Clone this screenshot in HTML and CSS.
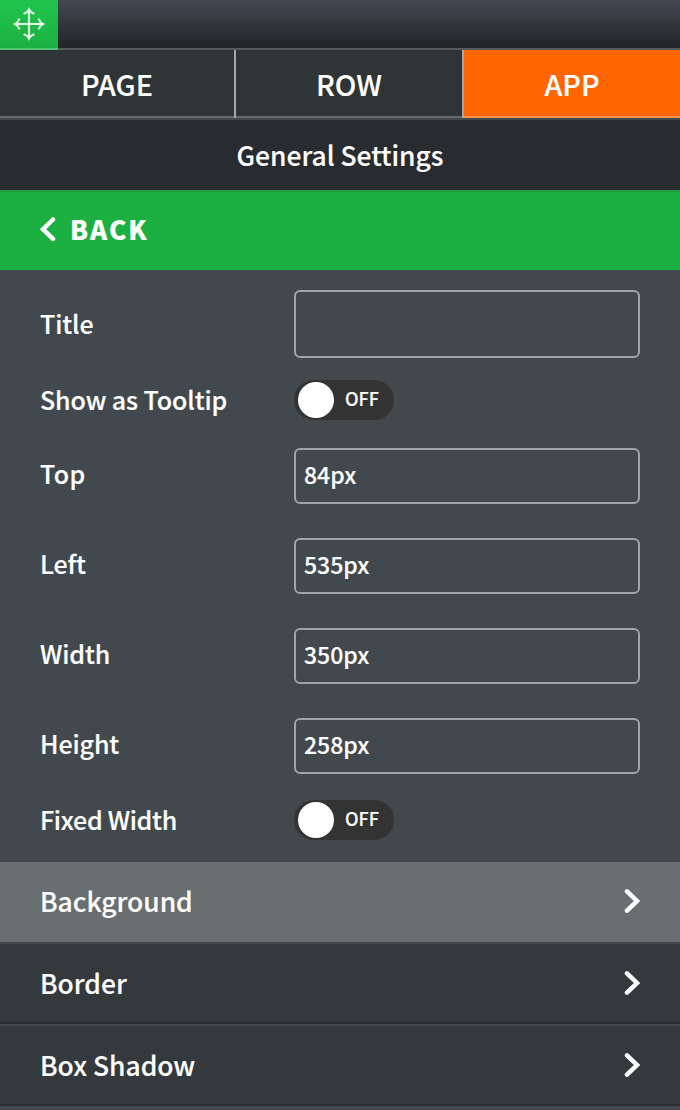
FILE: index.html
```html
<!DOCTYPE html>
<html lang="en">
<head>
<meta charset="utf-8">
<title>General Settings</title>
<link rel="stylesheet" href="styles.css">
</head>
<body>
<div class="panel">
  <header class="topbar">
    <div class="move">
      <svg class="move-icon" width="32" height="34" viewBox="0 0 32 34">
        <path d="M16 3V31M3 17H29"/>
        <path class="heads" d="M11.500 6.500Q14.500 5.500 16 2.500Q17.500 5.500 20.500 6.500M11.500 27.500Q14.500 28.500 16 31.500Q17.500 28.500 20.500 27.500M6 12.500Q5 15.500 2 17Q5 18.500 6 21.500M26 12.500Q27 15.500 30 17Q27 18.500 26 21.500"/>
      </svg>
    </div>
  </header>
  <nav class="tabs">
    <div class="tab tab-page"><span>PAGE</span></div>
    <div class="divider"></div>
    <div class="tab tab-row"><span>ROW</span></div>
    <div class="divider"></div>
    <div class="tab tab-app active"><span>APP</span></div>
  </nav>
  <div class="heading"><span>General Settings</span></div>
  <div class="back">
    <svg class="chevron" width="16" height="26" viewBox="0 0 16 26"><path d="M13 3.500L3 13.200L13 22.900"/></svg>
    <span>BACK</span>
  </div>
  <div class="form">
    <div class="field field-title"><label>Title</label><div class="input"></div></div>
    <div class="field field-toggle"><label>Show as Tooltip</label><div class="toggle"><i class="knob"></i><span>OFF</span></div></div>
    <div class="field"><label class="top">Top</label><div class="input"><span>84px</span></div></div>
    <div class="field"><label>Left</label><div class="input"><span>535px</span></div></div>
    <div class="field"><label>Width</label><div class="input"><span>350px</span></div></div>
    <div class="field"><label>Height</label><div class="input"><span>258px</span></div></div>
    <div class="field field-toggle"><label class="fixed">Fixed Width</label><div class="toggle"><i class="knob"></i><span>OFF</span></div></div>
  </div>
  <div class="sections">
    <div class="section current"><span>Background</span><svg class="chevron" width="16" height="26" viewBox="0 0 16 26"><path d="M3 3.300L13 13L3 22.700"/></svg></div>
    <div class="section"><span>Border</span><svg class="chevron" width="16" height="26" viewBox="0 0 16 26"><path d="M3 3.300L13 13L3 22.700"/></svg></div>
    <div class="section"><span>Box Shadow</span><svg class="chevron" width="16" height="26" viewBox="0 0 16 26"><path d="M3 3.300L13 13L3 22.700"/></svg></div>
  </div>
</div>
</body>
</html>
```
FILE: styles.css
```css
* { box-sizing: border-box; }
body {
  margin: 0;
  background: #42494e;
  color: #fff;
  font-family: "Noto Sans CJK SC", sans-serif;
  font-weight: 500;
  -webkit-text-stroke: 0.15px #fff;
}
.panel { width: 680px; height: 1110px; overflow: hidden; }
.topbar {
  height: 50px;
  border-bottom: 2px solid #56595b;
  background: linear-gradient(#434751, #212527) padding-box;
}
.move {
  width: 58px;
  height: 50px;
  display: flex;
  justify-content: center;
  padding-top: 7px;
  background: linear-gradient(#20c54c, #1cb042);
  border-bottom: 2px solid #55c270;
}
.move-icon { fill: none; stroke: #dcf8e3; stroke-width: 2.2; stroke-linecap: round; }
.tabs { display: flex; height: 70px; border-bottom: 2px solid #42494d; }
.tab {
  display: flex;
  align-items: center;
  justify-content: center;
  height: 68px;
  padding-top: 2px;
  background: #2f3437;
  border-bottom: 2px solid #626769;
  font-size: 28.7px;
  line-height: 40px;
}
.tab-page { width: 234px; }
.tab-row { width: 226px; }
.tab-app { width: 216px; }
.divider { width: 2px; height: 68px; background: #a5a7a8; }
.active { background: #ff6600; border-bottom-color: #ff914b; }
.heading {
  height: 70px;
  display: flex;
  align-items: center;
  justify-content: center;
  background: #282b2f;
  font-size: 26.4px;
  line-height: 40px;
}
.back {
  height: 80px;
  display: flex;
  align-items: center;
  gap: 14px;
  padding: 0 40px 4px;
  border-top: 2px solid #1d9f3e;
  background: #1cb042;
  font-size: 26px;
  font-weight: 900;
  letter-spacing: 2px;
  line-height: 40px;
}
.chevron { fill: none; stroke: #fff; stroke-width: 4.500; stroke-linecap: round; }
.form {
  height: 592px;
  display: flex;
  flex-direction: column;
  padding: 20px 40px 0;
}
.field {
  flex-shrink: 0;
  display: flex;
  align-items: center;
  height: 56px;
  margin-bottom: 34px;
  font-size: 25px;
  line-height: 36px;
}
.field label { width: 254px; padding-bottom: 6px; letter-spacing: -0.1px; }
.field label.top { letter-spacing: 0.4px; }
.field-title label, .field-toggle label { padding-bottom: 2px; }
.field label.fixed { letter-spacing: -0.3px; }
.field-title { height: 68px; margin-bottom: 22px; }
.field-toggle { height: 40px; margin-bottom: 28px; }
.field:nth-child(6) { margin-bottom: 26px; }
.field:last-child { margin-bottom: 0; }
.input {
  width: 346px;
  height: 100%;
  display: flex;
  align-items: center;
  padding: 0 0 4px 8px;
  border: 2px solid #a0a4a6;
  border-radius: 6px;
  font-size: 23px;
}
.toggle {
  width: 100px;
  height: 40px;
  display: flex;
  align-items: center;
  gap: 11px;
  padding-left: 4px;
  border-radius: 20px;
  background: #333;
  font-size: 18px;
}
.toggle span { padding-bottom: 4px; }
.knob { width: 36px; height: 36px; border-radius: 50%; background: #fff; }
.section {
  height: 82px;
  display: flex;
  align-items: center;
  justify-content: space-between;
  padding: 0 40px;
  border-top: 2px solid #42494e;
  border-bottom: 2px solid #2a2e31;
  background: #34393d;
  font-size: 26.4px;
  line-height: 40px;
}
.current { height: 80px; padding-bottom: 2px; border: 0; background: #696e71; }
```
